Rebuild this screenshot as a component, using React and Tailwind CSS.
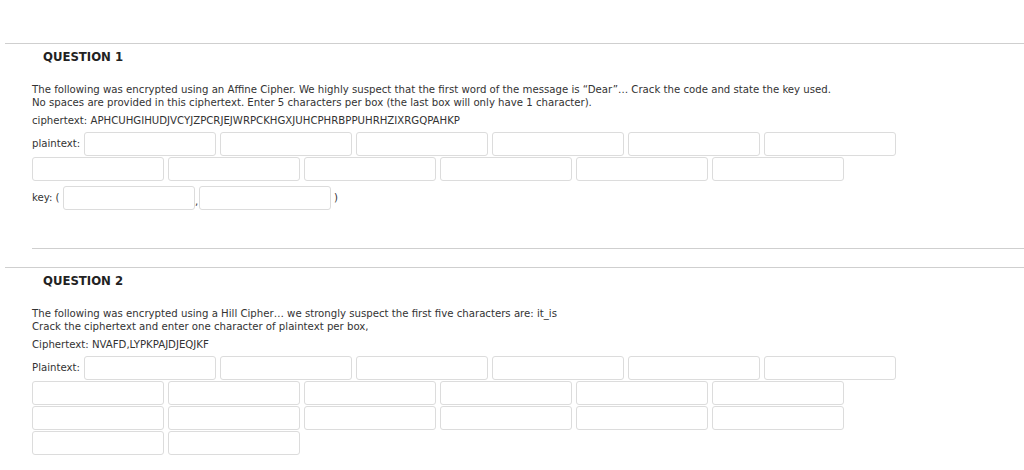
import React from 'react';

const FONT = { fontFamily: '"DejaVu Sans Condensed", "DejaVu Sans", sans-serif' };

const Box = () => (
    <input type="text" className="w-[132px] h-6 border border-[#dcdcdc] rounded-[3px] bg-white outline-none" />
);

const BoxGrid = ({ label, count }) => (
    <div className="flex flex-wrap items-center gap-x-1 gap-y-px w-[870px]">
        <span className="w-12 text-[11.3px] text-[#333]">{label}</span>
        {Array.from({ length: count }).map((_, i) => (
            <Box key={i} />
        ))}
    </div>
);

const Question = ({ title, lines, cipher, children }) => (
    <div className="border-t border-[#cfcfcf] ml-[5px]">
        <h2 className="pl-[38px] pt-[5px] h-[21px] text-[13px] leading-4 font-bold text-[#222]">{title}</h2>
        <div className="pl-[27px]">
            <p className="mt-[18px] text-[11.3px] leading-[13px] text-[#333]">
                {lines.map((l, i) => (
                    <span key={i} className="block">{l}</span>
                ))}
            </p>
            <p className="mt-[5px] text-[11.3px] leading-[13px] text-[#333]">{cipher}</p>
            <div className="mt-[5px]">{children}</div>
        </div>
    </div>
);

export default function App() {
    return (
        <div className="w-[1024px] h-[470px] bg-white overflow-hidden pt-[43px]" style={FONT}>
            <Question
                title="QUESTION 1"
                lines={[
                    'The following was encrypted using an Affine Cipher. We highly suspect that the first word of the message is \u201cDear\u201d\u2026 Crack the code and state the key used.',
                    'No spaces are provided in this ciphertext. Enter 5 characters per box (the last box will only have 1 character).',
                ]}
                cipher="ciphertext: APHCUHGIHUDJVCYJZPCRJEJWRPCKHGXJUHCPHRBPPUHRHZIXRGQPAHKP"
            >
                <BoxGrid label="plaintext:" count={12} />
                <div className="mt-[5px] flex items-center text-[11.3px] text-[#333]">
                    <span className="w-[31px]">key: (</span>
                    <Box />
                    <span className="w-1 self-end leading-4">,</span>
                    <Box />
                    <span className="ml-[3px]">)</span>
                </div>
                <div className="mt-[38px] border-t border-[#cfcfcf]" />
            </Question>
            <div className="h-[18px]" />
            <Question
                title="QUESTION 2"
                lines={[
                    'The following was encrypted using a Hill Cipher\u2026 we strongly suspect the first five characters are: it_is',
                    'Crack the ciphertext and enter one character of plaintext per box,',
                ]}
                cipher="Ciphertext: NVAFD,LYPKPAJDJEQJKF"
            >
                <BoxGrid label="Plaintext:" count={20} />
            </Question>
        </div>
    );
}
